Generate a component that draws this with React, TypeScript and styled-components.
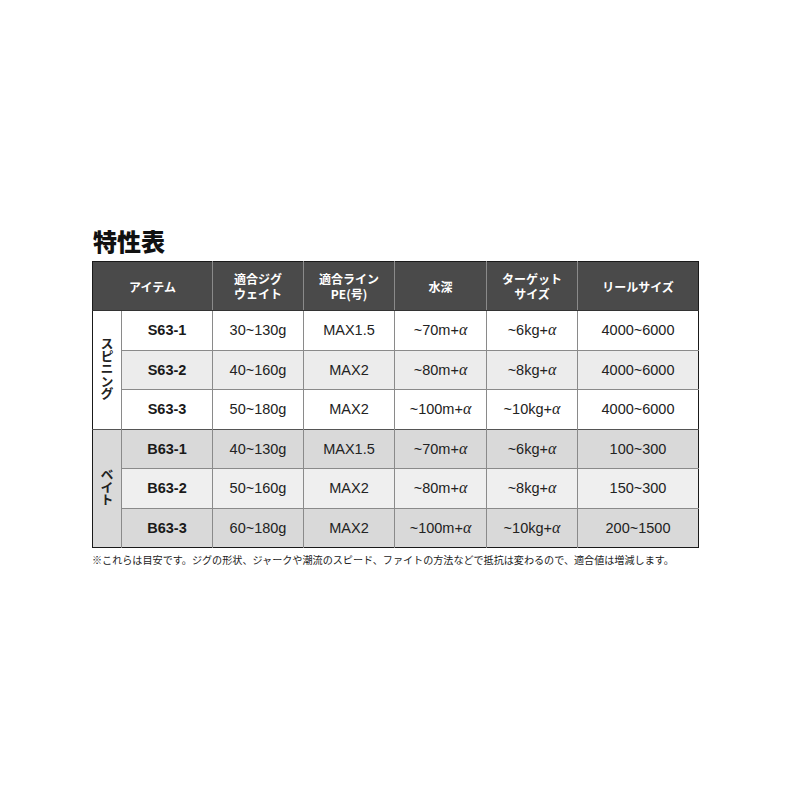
import styled, { createGlobalStyle } from 'styled-components'

const GlobalStyle = createGlobalStyle`
  body {
    margin: 0;
    background: #fff;
    font-family: 'Liberation Sans', 'Noto Sans CJK JP', sans-serif;
    color: #222;
  }
`

type Row = {
  model: string
  jig: string
  line: string
  depth: string
  target: string
  reel: string
}

const spinning: Row[] = [
  { model: 'S63-1', jig: '30~130g', line: 'MAX1.5', depth: '~70m+', target: '~6kg+', reel: '4000~6000' },
  { model: 'S63-2', jig: '40~160g', line: 'MAX2', depth: '~80m+', target: '~8kg+', reel: '4000~6000' },
  { model: 'S63-3', jig: '50~180g', line: 'MAX2', depth: '~100m+', target: '~10kg+', reel: '4000~6000' },
]

const bait: Row[] = [
  { model: 'B63-1', jig: '40~130g', line: 'MAX1.5', depth: '~70m+', target: '~6kg+', reel: '100~300' },
  { model: 'B63-2', jig: '50~160g', line: 'MAX2', depth: '~80m+', target: '~8kg+', reel: '150~300' },
  { model: 'B63-3', jig: '60~180g', line: 'MAX2', depth: '~100m+', target: '~10kg+', reel: '200~1500' },
]

const shades = {
  spin: ['#ffffff', '#ececec', '#ffffff'],
  bait: ['#d9d9d9', '#efefef', '#d9d9d9'],
}

function Section({ label, rows, tone }: { label: string; rows: Row[]; tone: 'spin' | 'bait' }) {
  return (
    <>
      {rows.map((r, i) => (
        <BodyRow key={r.model} bg={shades[tone][i]} first={i === 0 && tone === 'bait'}>
          {i === 0 && (
            <SectionCell rowSpan={rows.length} bg={tone === 'spin' ? '#ffffff' : '#d9d9d9'}>
              <Vertical>{label}</Vertical>
            </SectionCell>
          )}
          <ModelCell>{r.model}</ModelCell>
          <Cell>{r.jig}</Cell>
          <Cell>{r.line}</Cell>
          <Cell>{r.depth}<Alpha>α</Alpha></Cell>
          <Cell>{r.target}<Alpha>α</Alpha></Cell>
          <Cell>{r.reel}</Cell>
        </BodyRow>
      ))}
    </>
  )
}

function App() {
  return (
    <Page>
      <GlobalStyle />
      <Title>特性表</Title>
      <Table>
        <colgroup>
          <col style={{ width: 29 }} />
          <col style={{ width: 91 }} />
          <col style={{ width: 91 }} />
          <col style={{ width: 91 }} />
          <col style={{ width: 92 }} />
          <col style={{ width: 91 }} />
          <col style={{ width: 121 }} />
        </colgroup>
        <thead>
          <tr>
            <Head colSpan={2}>アイテム</Head>
            <Head><HeadLine>適合ジグ</HeadLine><HeadLine>ウェイト</HeadLine></Head>
            <Head><HeadLine>適合ライン</HeadLine><HeadLine>PE(号)</HeadLine></Head>
            <Head>水深</Head>
            <Head><HeadLine>ターゲット</HeadLine><HeadLine>サイズ</HeadLine></Head>
            <Head>リールサイズ</Head>
          </tr>
        </thead>
        <tbody>
          <Section label="スピニング" rows={spinning} tone="spin" />
          <Section label="ベイト" rows={bait} tone="bait" />
        </tbody>
      </Table>
      <Note>※これらは目安です。ジグの形状、ジャークや潮流のスピード、ファイトの方法などで抵抗は変わるので、適合値は増減します。</Note>
    </Page>
  )
}

const Page = styled.div`
  padding: 226px 0 0 92px;
  width: 608px;
`

const Title = styled.h1`
  margin: 0 0 5px 1px;
  font-family: 'Noto Sans CJK JP', sans-serif;
  font-size: 24px;
  font-weight: 900;
  line-height: 30px;
  color: #111;
`

const Table = styled.table`
  border-collapse: collapse;
  table-layout: fixed;
  width: 607px;
  border: 1.5px solid #1a1a1a;
`

const Head = styled.th`
  height: 48px;
  padding: 0;
  background: #4a4a4a;
  color: #fff;
  font-family: 'Noto Sans CJK JP', sans-serif;
  font-size: 12px;
  font-weight: 700;
  line-height: 15px;
  text-align: center;
  vertical-align: middle;
  border-left: 1px solid #8a8a8a;
  border-bottom: 1px solid #333;
  &:first-child {
    border-left: none;
  }
`

const HeadLine = styled.span`
  display: block;
  height: 15px;
  line-height: 15px;
`

const BodyRow = styled.tr<{ bg: string; first: boolean }>`
  height: 39.5px;
  background: ${({ bg }) => bg};
  border-top: ${({ first }) => (first ? '1.5px solid #555' : '1px solid #8a8a8a')};
`

const Cell = styled.td`
  padding: 0;
  text-align: center;
  vertical-align: middle;
  font-size: 14.5px;
  color: #222;
  border-left: 1px solid #8a8a8a;
`

const Alpha = styled.span`
  font-family: 'Liberation Serif', serif;
  font-style: italic;
  font-size: 16px;
`

const ModelCell = styled(Cell)`
  font-weight: 700;
  color: #1a1a1a;
`

const SectionCell = styled.td<{ bg: string }>`
  padding: 0;
  background: ${({ bg }) => bg};
  text-align: center;
  vertical-align: middle;
`

const Vertical = styled.span`
  display: inline-block;
  writing-mode: vertical-rl;
  text-orientation: upright;
  font-family: 'Noto Sans CJK JP', sans-serif;
  font-size: 13px;
  font-weight: 700;
  line-height: 1;
  letter-spacing: -0.5px;
  color: #222;
`

const Note = styled.p`
  margin: 5px 0 0 0;
  font-family: 'Noto Sans CJK JP', sans-serif;
  font-size: 10.1px;
  line-height: 14px;
  color: #222;
  white-space: nowrap;
`

export default App
